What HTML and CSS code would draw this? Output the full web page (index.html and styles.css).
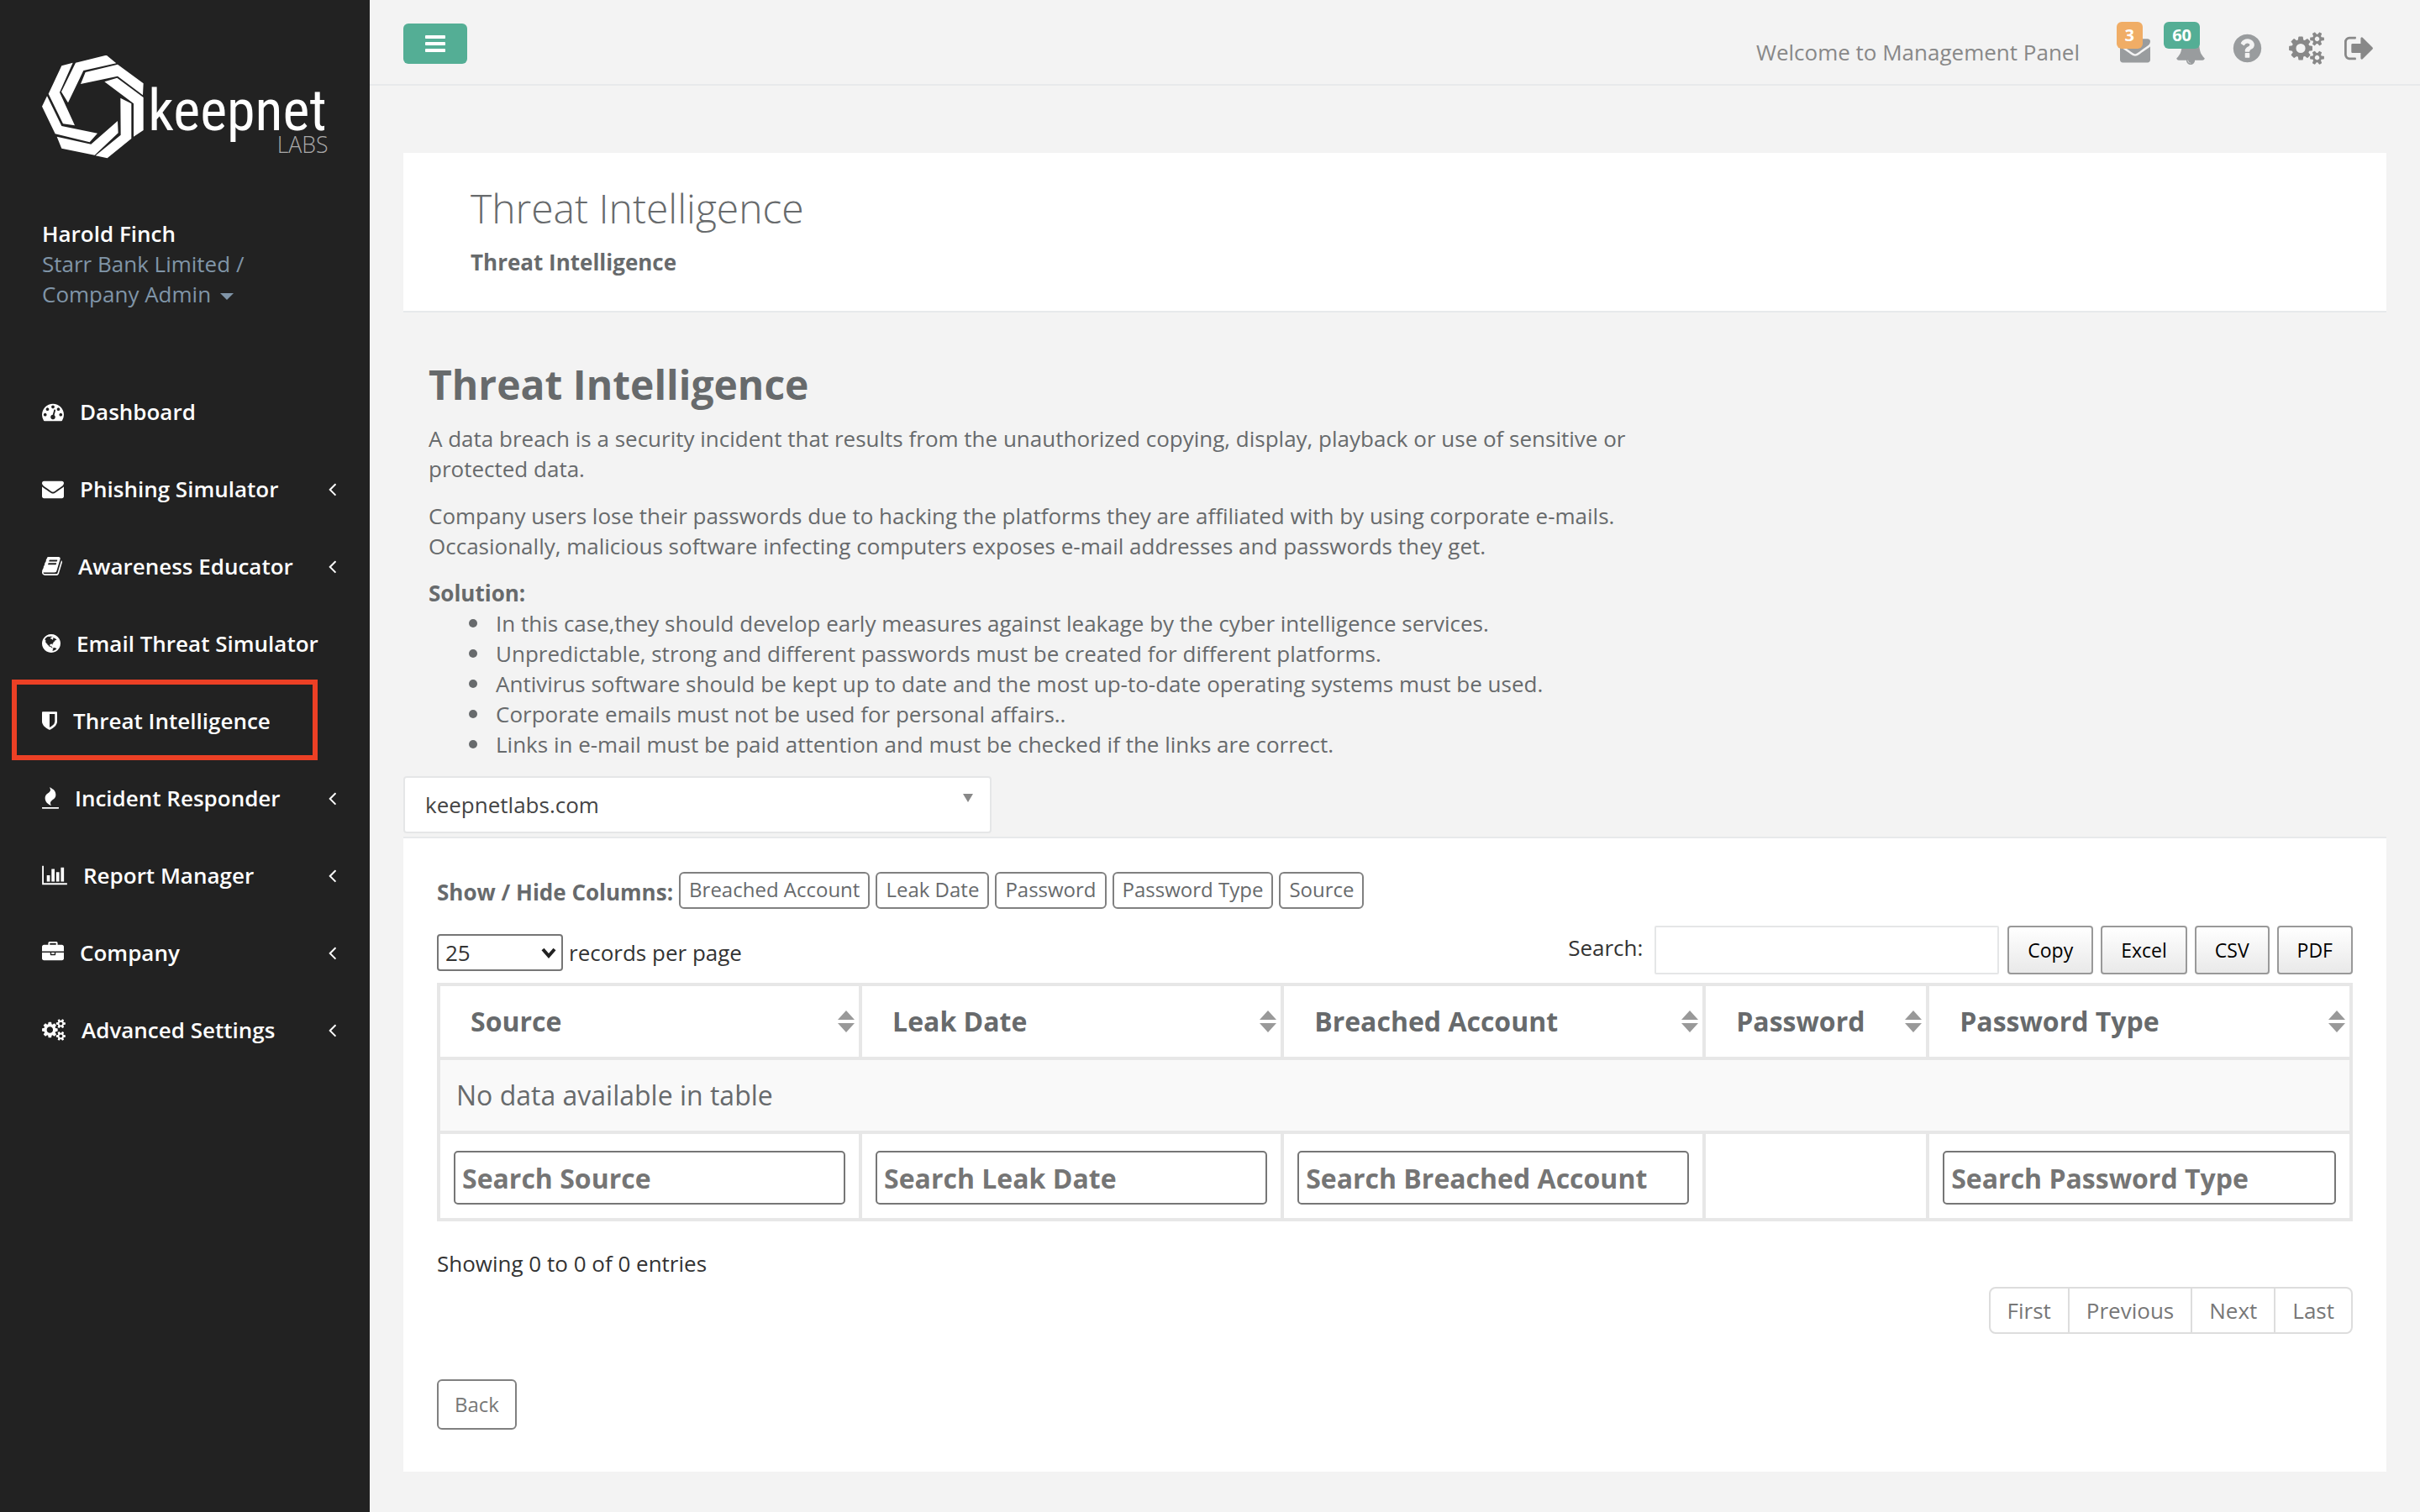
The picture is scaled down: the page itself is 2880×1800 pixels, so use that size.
FILE: index.html
```html
<!DOCTYPE html>
<html lang="en">
<head>
<meta charset="utf-8">
<title>Threat Intelligence</title>
<meta name="viewport" content="width=device-width, initial-scale=1">
<link rel="stylesheet" href="styles.css">
</head>
<body>
<div class="layout">
  <aside class="sidebar">
    <a class="brand" href="#" aria-label="Keepnet Labs">
      <svg class="brand-logo" viewBox="15 18 1029 369">
        <g fill="#fff">
          <path d="M245 17 280 46 163 72 108 187 84 148 135 44Z"/>
          <path d="M85 55 125 44 78 150 132 268 90 262 38 155Z"/>
          <path d="M33 163 85 270 213 296 185 328 62 298 15 200Z"/>
          <path d="M68 308 190 335 285 252 287 295 203 374 85 350Z"/>
          <path d="M206 376 296 302 295 170 334 190 334 315 248 385Z"/>
          <path d="M342 308 342 190 238 112 283 98 377 168 377 285Z"/>
          <path d="M375 160 285 92 153 120 170 78 285 50 377 118Z"/>
        </g>
        <text class="brand-name" x="394" y="284">keepnet</text>
        <text class="brand-sub" x="854" y="366">LABS</text>
      </svg>
    </a>
    <div class="profile">
      <strong class="profile-name">Harold Finch</strong>
      <a class="profile-role" href="#">Starr Bank Limited /<br>Company Admin <span class="caret"></span></a>
    </div>
    <nav>
      <ul class="menu">
        <li class="menu-item"><a href="#"><svg class="i26" viewBox="0 0 1792 1792"><path d="M384 1152q0-53-37.500-90.500t-90.500-37.500-90.500 37.500-37.500 90.500 37.500 90.500 90.500 37.500 90.500-37.500 37.500-90.500zm192-448q0-53-37.500-90.500t-90.500-37.500-90.500 37.500-37.500 90.500 37.500 90.500 90.500 37.500 90.500-37.500 37.500-90.500zm428 481l101-382q6-26-7.500-48.500t-38.500-29.500-48 6.500-30 39.500l-101 382q-60 5-107 43.500t-63 98.500q-20 77 20 146t117 89 146-20 89-117q16-60-6-117t-72-91zm660-33q0-53-37.500-90.500t-90.500-37.500-90.500 37.500-37.500 90.500 37.500 90.500 90.500 37.500 90.500-37.500 37.500-90.500zm-640-640q0-53-37.500-90.500t-90.500-37.500-90.500 37.500-37.500 90.500 37.500 90.500 90.500 37.500 90.500-37.500 37.500-90.500zm448 192q0-53-37.500-90.500t-90.500-37.500-90.500 37.500-37.500 90.500 37.500 90.500 90.500 37.500 90.500-37.500 37.500-90.500zm320 448q0 261-141 483-19 29-54 29h-1402q-35 0-54-29-141-221-141-483 0-182 71-348t191-286 286-191 348-71 348 71 286 191 191 286 71 348z"/></svg>Dashboard</a></li>
        <li class="menu-item"><a href="#"><svg class="i26" viewBox="0 0 1792 1792"><path d="M1792 710v794q0 66-47 113t-113 47h-1472q-66 0-113-47t-47-113v-794q44 49 101 87 362 246 497 345 57 42 92.500 65.500t94.500 48 110 24.500h2q51 0 110-24.500t94.500-48 92.500-65.500q170-123 498-345 57-39 100-87zm0-294q0 79-49 151t-122 123q-376 261-468 325-10 7-42.500 31t-54 38.500-52 32.500-57.500 27-50 9h-2q-23 0-50-9t-57.500-27-52-32.500-54-38.500-42.500-31q-91-64-262-182.500t-205-142.500q-62-42-117-115.500t-55-136.500q0-78 41.500-130t118.500-52h1472q65 0 112.500 47t47.500 113z"/></svg>Phishing Simulator<svg class="chevron" viewBox="608 0 640 1792"><path d="M1203 544q0 13-10 23l-393 393 393 393q10 10 10 23t-10 23l-50 50q-10 10-23 10t-23-10l-466-466q-10-10-10-23t10-23l466-466q10-10 23-10t23 10l50 50q10 10 10 23z"/></svg></a></li>
        <li class="menu-item"><a href="#"><svg class="i24" viewBox="64 0 1664 1792"><path d="M1703 478q40 57 18 129l-275 906q-19 64-76.500 107.500t-122.500 43.500h-923q-77 0-148.500-53.500t-99.500-131.500q-24-67-2-127 0-4 3-27t4-37q1-8-3-21.500t-3-19.500q2-11 8-21t16.500-23.500 16.500-23.500q23-38 45-91.500t30-91.500q3-10 .5-30t-.5-28q3-11 17-28t17-23q21-36 42-92t25-90q1-9-2.500-32t.5-28q4-13 22-30.500t22-22.500q19-26 42.500-84.500t27.500-96.500q1-8-3-25.500t-2-26.500q2-8 9-18t18-23 17-21q8-12 16.500-30.500t15-35 16-36 19.500-32 26.500-23.500 36-11.500 47.500 5.500l-1 3q38-9 51-9h761q74 0 114 56t18 130l-274 906q-36 119-71.500 153.500t-128.500 34.500h-869q-27 0-38 15-11 16-1 43 24 70 144 70h923q29 0 56-15.500t35-41.500l300-987q7-22 5-57 38 15 59 43zm-1064 2q-4 13 2 22.500t20 9.500h608q13 0 25.500-9.500t16.500-22.500l21-64q4-13-2-22.500t-20-9.500h-608q-13 0-25.500 9.500t-16.500 22.500zm-83 256q-4 13 2 22.500t20 9.500h608q13 0 25.500-9.500t16.500-22.500l21-64q4-13-2-22.500t-20-9.500h-608q-13 0-25.500 9.500t-16.500 22.500z"/></svg>Awareness Educator<svg class="chevron" viewBox="608 0 640 1792"><path d="M1203 544q0 13-10 23l-393 393 393 393q10 10 10 23t-10 23l-50 50q-10 10-23 10t-23-10l-466-466q-10-10-10-23t10-23l466-466q10-10 23-10t23 10l50 50q10 10 10 23z"/></svg></a></li>
        <li class="menu-item"><a href="#"><svg class="i22" viewBox="128 0 1536 1792"><path d="M896 128q209 0 385.500 103t279.500 279.500 103 385.500-103 385.500-279.500 279.500-385.500 103-385.500-103-279.500-279.500-103-385.500 103-385.500 279.500-279.500 385.500-103zm274 521q-2 1-9.500 9.500t-13.500 9.500q2 0 4.500-5t5-11 3.500-7q6-7 22-15 14-6 52-12 34-8 51 11-2-2 9.500-13t14.500-12q3-2 15-4.500t15-7.500l2-22q-12 1-17.500-7t-6.500-21q0 2-6 8 0-7-4.500-8t-11.500 1-9 1q-10-3-15-7.500t-8-16.500-4-15q-2-5-9.500-11t-9.500-10q-1-2-2.500-5.500t-3-6.500-4-5.500-5.500-2.500-7 5-7.500 10-4.500 5q-3-2-6-1.500t-4.500 1-4.500 3-5 3.500q-3 2-8.500 3t-8.500 2q15-5-1-11-10-4-16-3 9-4 7.500-12t-8.500-14h5q-1-4-8.500-8.500t-17.500-8.500-13-6q-8-5-34-9.500t-33-.5q-5 6-4.500 10.500t4 14 3.500 12.500q1 6-5.500 13t-6.500 12q0 7 14 15.500t10 21.500q-3 8-16 16t-16 12q-5 8-1.500 18.500t10.500 16.500q2 2 1.500 4t-3.500 4.500-5.500 4-6.500 3.500l-3 2q-11 5-20.500-6t-13.500-26q-7-25-16-30-23-8-29 1-5-13-41-26-25-9-58-4 6-1 0-15-7-15-19-12 3-6 4-17.500t1-13.500q3-13 12-23 1-1 7-8.500t9.500-13.500.5-6q35 4 50-11 5-5 11.500-17t10.500-17q9-6 14-5.500t14.500 5.500 14.500 5q14 1 15.500-11t-7.500-20q12 1 3-17-4-7-8-9-12-4-27 5-8 4 2 8-1-1-9.500 10.500t-16.500 17.500-16-5q-1-1-5.500-13.500t-9.500-13.500q-8 0-16 15 3-8-11-15t-24-8q19-12-8-27-7-4-20.500-5t-19.500 4q-5 7-5.500 11.500t5 8 10.500 5.500 11.500 4 8.500 3q14 10 8 14-2 1-8.500 3.500t-11.500 4.500-6 4q-3 4 0 14t-2 14q-5-5-9-17.500t-7-16.500q7 9-25 6l-10-1q-4 0-16 2t-20.500 1-13.500-8q-4-8 0-20 1-4 4-2-4-3-11-9.500t-10-8.500q-46 15-94 41 6 1 12-1 5-2 13-6.500t10-5.500q34-14 42-7l5-5q14 16 20 25-7-4-30-1-20 6-22 12 7 12 5 18-4-3-11.500-10t-14.500-11-15-5q-16 0-22 1-146 80-235 222 7 7 12 8 4 1 5 9t2.500 11 11.500-3q9 8 3 19 1-1 44 27 19 17 21 21 3 11-10 18-1-2-9-9t-9-4q-3 5 .5 18.500t10.500 12.500q-7 0-9.500 16t-2.500 35.500-1 23.500l2 1q-3 12 5.500 34.500t21.500 19.500q-13 3 20 43 6 8 8 9 3 2 12 7.500t15 10 10 10.500q4 5 10 22.500t14 23.500q-2 6 9.500 20t10.500 23q-1 0-2.500 1t-2.500 1q3 7 15.500 14t15.500 13q1 3 2 10t3 11 8 2q2-20-24-62-15-25-17-29-3-5-5.500-15.500t-4.500-14.500q2 0 6 1.500t8.500 3.500 7.500 4 2 3q-3 7 2 17.500t12 18.500 17 19 12 13q6 6 14 19.500t0 13.500q9 0 20 10.500t17 19.500q5 8 8 26t5 24q2 7 8.500 13.500t12.500 9.500l16 8 13 7q5 2 18.500 10.500t21.500 11.500q10 4 16 4t14.500-2.500 13.500-3.500q15-2 29 15t21 21q36 19 55 11-2 1 .5 7.500t8 15.500 9 14.500 5.500 8.500q5 6 18 15t18 15q6-4 7-9-3 8 7 20t18 10q14-3 14-32-31 15-49-18 0-1-2.500-5.500t-4-8.500-2.500-8.500 0-7.500 5-3q9 0 10-3.500t-2-12.500-4-13q-1-8-11-20t-12-15q-5 9-16 8t-16-9q0 1-1.500 5.500t-1.500 6.500q-13 0-15-1 1-3 2.500-17.500t3.500-22.500q1-4 5.500-12t7.500-14.500 4-12.500-4.500-9.500-17.500-2.500q-19 1-26 20-1 3-3 10.500t-5 11.500-9 7q-7 3-24 2t-24-5q-13-8-22.500-29t-9.500-37q0-10 2.500-26.500t3-25-5.500-24.500q3-2 9-9.500t10-10.500q2-1 4.500-1.500t4.500 0 4-1.500 3-6q-1-1-4-3-3-3-4-3 7 3 28.500-1.500t27.500 1.500q15 11 22-2 0-1-2.500-9.500t-.5-13.500q5 27 29 9 3 3 15.500 5t17.500 5q3 2 7 5.500t5.500 4.500 5-.5 8.500-6.500q10 14 12 24 11 40 19 44 7 3 11 2t4.500-9.500 0-14-1.500-12.500l-1-8v-18l-1-8q-15-3-18.500-12t1.500-18.500 15-18.500q1-1 8-3.500t15.500-6.500 12.500-8q21-19 15-35 7 0 11-9-1 0-5-3t-7.500-5-4.500-2q9-5 2-16 5-3 7.500-11t7.500-10q9 12 21 2 8-8 1-16 5-7 20.500-10.500t18.500-9.500q7 2 8-2t1-12 3-12q4-5 15-9t13-5l17-11q3-4 0-4 18 2 31-11 10-11-6-20 3-6-3-9.500t-15-5.500q3-1 11.500-.5t10.500-1.500q15-10-7-16-17-5-43 12zm-163 877q206-36 351-189-3-3-12.500-4.500t-12.500-3.500q-18-7-24-8 1-7-2.500-13t-8-9-12.500-8-11-7q-2-2-7-6t-7-5.500-7.500-4.500-8.500-2-10 1l-3 1q-3 1-5.500 2.500t-5.500 3-4 3 0 2.500q-21-17-36-22-5-1-11-5.500t-10.500-7-10-1.500-11.500 7q-5 5-6 15t-2 13q-7-5 0-17.500t2-18.500q-3-6-10.500-4.500t-12 4.500-11.500 8.500-9 6.500-8.500 5.500-8.500 7.500q-3 4-6 12t-5 11q-2-4-11.500-6.500t-9.500-5.500q2 10 4 35t5 38q7 31-12 48-27 25-29 40-4 22 12 26 0 7-8 20.500t-7 21.500q0 6 2 16z"/></svg>Email Threat Simulator</a></li>
        <li class="menu-item is-active"><a href="#" aria-current="page"><svg class="i18" viewBox="256 0 1280 1792"><path d="M1344 960v-640h-448v1137q119-63 213-137 235-184 235-360zm192-768v768q0 86-33.500 170.500t-83 150-118 127.500-126.500 103-121 77.500-89.500 49.500-42.500 20q-12 6-26 6t-26-6q-16-7-42.500-20t-89.500-49.500-121-77.500-126.500-103-118-127.500-83-150-33.500-170.500v-768q0-26 19-45t45-19h1152q26 0 45 19t19 45z"/></svg>Threat Intelligence</a></li>
        <li class="menu-item"><a href="#"><svg class="i20" viewBox="0 0 1408 1792"><path d="M1408 1696v64q0 13-9.500 22.500t-22.500 9.500h-1344q-13 0-22.500-9.500t-9.500-22.500v-64q0-13 9.500-22.500t22.500-9.500h1344q13 0 22.500 9.500t9.500 22.500zm-256-1056q0 78-24.500 144t-64 112.500-87.500 88-96 77.500-87.500 72-64 81.500-24.500 96.500q0 96 67 224l-4-1 1 1q-90-41-160-83t-138.500-100-113.500-122.500-72.500-150.500-27.500-184q0-78 24.500-144t64-112.500 87.500-88 96-77.500 87.500-72 64-81.500 24.500-96.500q0-94-66-224l3 1-1-1q90 41 160 83t138.500 100 113.500 122.500 72.500 150.500 27.500 184z"/></svg>Incident Responder<svg class="chevron" viewBox="608 0 640 1792"><path d="M1203 544q0 13-10 23l-393 393 393 393q10 10 10 23t-10 23l-50 50q-10 10-23 10t-23-10l-466-466q-10-10-10-23t10-23l466-466q10-10 23-10t23 10l50 50q10 10 10 23z"/></svg></a></li>
        <li class="menu-item"><a href="#"><svg class="i30" viewBox="0 0 2048 1792"><path d="M640 896v512h-256v-512h256zm384-512v1024h-256v-1024h256zm1024 1152v128h-2048v-1536h128v1408h1920zm-640-896v768h-256v-768h256zm384-384v1152h-256v-1152h256z"/></svg>Report Manager<svg class="chevron" viewBox="608 0 640 1792"><path d="M1203 544q0 13-10 23l-393 393 393 393q10 10 10 23t-10 23l-50 50q-10 10-23 10t-23-10l-466-466q-10-10-10-23t10-23l466-466q10-10 23-10t23 10l50 50q10 10 10 23z"/></svg></a></li>
        <li class="menu-item"><a href="#"><svg class="i26" viewBox="0 0 1792 1792"><path d="M640 256h512v-128h-512v128zm1152 640v480q0 66-47 113t-113 47h-1472q-66 0-113-47t-47-113v-480h672v160q0 26 19 45t45 19h320q26 0 45-19t19-45v-160h672zm-768 0v128h-256v-128h256zm768-480v384h-1792v-384q0-66 47-113t113-47h352v-160q0-40 28-68t68-28h576q40 0 68 28t28 68v160h352q66 0 113 47t47 113z"/></svg>Company<svg class="chevron" viewBox="608 0 640 1792"><path d="M1203 544q0 13-10 23l-393 393 393 393q10 10 10 23t-10 23l-50 50q-10 10-23 10t-23-10l-466-466q-10-10-10-23t10-23l466-466q10-10 23-10t23 10l50 50q10 10 10 23z"/></svg></a></li>
        <li class="menu-item"><a href="#"><svg class="i28" viewBox="0 0 1920 1792"><path id="cogs" d="M896 896q0-106-75-181t-181-75-181 75-75 181 75 181 181 75 181-75 75-181zm768 512q0-52-38-90t-90-38-90 38-38 90q0 53 37.500 90.500t90.500 37.500 90.500-37.500 37.500-90.500zm0-1024q0-52-38-90t-90-38-90 38-38 90q0 53 37.500 90.500t90.500 37.500 90.500-37.500 37.500-90.500zm-384 421v185q0 10-7 19.500t-16 10.500l-155 24q-11 35-32 76 34 48 90 115 7 11 7 20 0 12-7 19-23 30-82.500 89.500t-78.500 59.500q-11 0-21-7l-115-90q-37 19-77 31-11 108-23 155-7 24-30 24h-186q-11 0-20-7.500t-10-17.500l-23-153q-34-10-75-31l-118 89q-7 7-20 7-11 0-21-8-144-133-144-160 0-9 7-19 10-14 41-53t47-61q-23-44-35-82l-152-24q-10-1-17-9.500t-7-19.500v-185q0-10 7-19.500t16-10.500l155-24q11-35 32-76-34-48-90-115-7-11-7-20 0-12 7-20 22-30 82-89t79-59q11 0 21 7l115 90q34-18 77-32 11-108 23-154 7-24 30-24h186q11 0 20 7.500t10 17.500l23 153q34 10 75 31l118-89q8-7 20-7 11 0 21 8 144 133 144 160 0 8-7 19-12 16-42 54t-45 60q23 48 34 82l152 23q10 2 17 10.500t7 19.500zm640 533v140q0 16-149 31-12 27-30 52 51 113 51 138 0 4-4 7-122 71-124 71-8 0-46-47t-52-68q-20 2-30 2t-30-2q-14 21-52 68t-46 47q-2 0-124-71-4-3-4-7 0-25 51-138-18-25-30-52-149-15-149-31v-140q0-16 149-31 13-29 30-52-51-113-51-138 0-4 4-7 4-2 35-20t59-34 30-16q8 0 46 46.500t52 67.500q20-2 30-2t30 2q51-71 92-112l6-2q4 0 124 70 4 3 4 7 0 25-51 138 17 23 30 52 149 15 149 31zm0-1024v140q0 16-149 31-12 27-30 52 51 113 51 138 0 4-4 7-122 71-124 71-8 0-46-47t-52-68q-20 2-30 2t-30-2q-14 21-52 68t-46 47q-2 0-124-71-4-3-4-7 0-25 51-138-18-25-30-52-149-15-149-31v-140q0-16 149-31 13-29 30-52-51-113-51-138 0-4 4-7 4-2 35-20t59-34 30-16q8 0 46 46.500t52 67.500q20-2 30-2t30 2q51-71 92-112l6-2q4 0 124 70 4 3 4 7 0 25-51 138 17 23 30 52 149 15 149 31z"/></svg>Advanced Settings<svg class="chevron" viewBox="608 0 640 1792"><path d="M1203 544q0 13-10 23l-393 393 393 393q10 10 10 23t-10 23l-50 50q-10 10-23 10t-23-10l-466-466q-10-10-10-23t10-23l466-466q10-10 23-10t23 10l50 50q10 10 10 23z"/></svg></a></li>
      </ul>
    </nav>
  </aside>

  <div class="page">
    <header class="topbar">
      <button class="menu-toggle" type="button" aria-label="Toggle menu"><svg viewBox="0 0 1792 1792"><path d="M1664 1344v128q0 26-19 45t-45 19h-1408q-26 0-45-19t-19-45v-128q0-26 19-45t45-19h1408q26 0 45 19t19 45zm0-512v128q0 26-19 45t-45 19h-1408q-26 0-45-19t-19-45v-128q0-26 19-45t45-19h1408q26 0 45 19t19 45zm0-512v128q0 26-19 45t-45 19h-1408q-26 0-45-19t-19-45v-128q0-26 19-45t45-19h1408q26 0 45 19t19 45z"/></svg></button>
      <div class="topbar-right">
        <span class="welcome">Welcome to Management Panel</span>
        <div class="shortcuts">
          <a class="soft" href="#" aria-label="Messages"><svg class="t36" viewBox="0 0 1792 1792"><path d="M1792 710v794q0 66-47 113t-113 47h-1472q-66 0-113-47t-47-113v-794q44 49 101 87 362 246 497 345 57 42 92.500 65.500t94.500 48 110 24.500h2q51 0 110-24.500t94.500-48 92.500-65.500q170-123 498-345 57-39 100-87zm0-294q0 79-49 151t-122 123q-376 261-468 325-10 7-42.500 31t-54 38.500-52 32.500-57.500 27-50 9h-2q-23 0-50-9t-57.500-27-52-32.500-54-38.500-42.500-31q-91-64-262-182.500t-205-142.500q-62-42-117-115.500t-55-136.500q0-78 41.500-130t118.500-52h1472q65 0 112.500 47t47.500 113z"/></svg><span class="badge badge-warn">3</span></a>
          <a class="soft" href="#" aria-label="Notifications"><svg class="t36" viewBox="0 0 1792 1792"><path d="M912 1696q0-16-16-16-59 0-101.500-42.500t-42.500-101.500q0-16-16-16t-16 16q0 73 51.500 124.500t124.500 51.500q16 0 16-16zm816-288q0 52-38 90t-90 38h-448q0 106-75 181t-181 75-181-75-75-181h-448q-52 0-90-38t-38-90q50-42 91-88t85-119.500 74.500-158.500 50-206 19.500-260q0-152 117-282.500t307-158.500q-8-19-8-39 0-40 28-68t68-28 68 28 28 68q0 20-8 39 190 28 307 158.500t117 282.500q0 139 19.500 260t50 206 74.500 158.500 85 119.500 91 88z"/></svg><span class="badge badge-ok">60</span></a>
          <a class="soft" href="#" aria-label="Help"><svg class="t39" viewBox="0 0 1792 1792"><path d="M1024 1376v-192q0-14-9-23t-23-9h-192q-14 0-23 9t-9 23v192q0 14 9 23t23 9h192q14 0 23-9t9-23zm256-672q0-88-55.500-163t-138.500-116-170-41q-243 0-371 213-15 24 8 42l132 100q7 6 19 6 16 0 25-12 53-68 86-92 34-24 86-24 48 0 85.500 26t37.500 59q0 38-20 61t-68 45q-63 28-115.500 86.500t-52.500 125.500v36q0 14 9 23t23 9h192q14 0 23-9t9-23q0-19 21.500-49.500t54.500-49.500q32-18 49-28.500t46-35 44.500-48 28-60.500 12.500-81zm384 192q0 209-103 385.500t-279.500 279.500-385.500 103-385.500-103-279.500-279.500-103-385.500 103-385.500 279.500-279.500 385.500-103 385.500 103 279.500 279.500 103 385.500z"/></svg></a>
          <a href="#" aria-label="Settings"><svg class="t42" viewBox="0 0 1920 1792"><use href="#cogs"/></svg></a>
          <a class="signout" href="#" aria-label="Sign out"><svg class="t36w" viewBox="64 0 1664 1792"><path d="M704 1440q0 4 1 20t.5 26.500-3 23.500-10 19.500-20.500 6.500h-320q-119 0-203.500-84.500t-84.500-203.500v-704q0-119 84.500-203.500t203.500-84.500h320q13 0 22.500 9.500t9.500 22.500q0 4 1 20t.5 26.500-3 23.500-10 19.500-20.500 6.500h-320q-66 0-113 47t-47 113v704q0 66 47 113t113 47h312l11.500 1 11.500 3 8 5.500 7 9 2 13.500zm928-544q0 26-19 45l-544 544q-19 19-45 19t-45-19-19-45v-288h-448q-26 0-45-19t-19-45v-384q0-26 19-45t45-19h448v-288q0-26 19-45t45-19 45 19l544 544q19 19 19 45z"/></svg></a>
        </div>
      </div>
    </header>

    <main class="content">
      <section class="title-card">
        <h1 class="page-title">Threat Intelligence</h1>
        <strong class="crumb">Threat Intelligence</strong>
      </section>

      <section class="intro">
        <h2 class="intro-title">Threat Intelligence</h2>
        <p>A data breach is a security incident that results from the unauthorized copying, display, playback or use of sensitive or protected data.</p>
        <p>Company users lose their passwords due to hacking the platforms they are affiliated with by using corporate e-mails. Occasionally, malicious software infecting computers exposes e-mail addresses and passwords they get.</p>
        <strong>Solution:</strong>
        <ul class="tips">
          <li>In this case,they should develop early measures against leakage by the cyber intelligence services.</li>
          <li>Unpredictable, strong and different passwords must be created for different platforms.</li>
          <li>Antivirus software should be kept up to date and the most up-to-date operating systems must be used.</li>
          <li>Corporate emails must not be used for personal affairs..</li>
          <li>Links in e-mail must be paid attention and must be checked if the links are correct.</li>
        </ul>
      </section>

      <div class="domain">
        <select class="domain-select" aria-label="Domain"><option>keepnetlabs.com</option></select>
        <svg class="domain-arrow" viewBox="0 0 12 10"><path d="M0 0H12L6 10Z"/></svg>
      </div>

      <section class="panel">
        <div class="columns">
          <strong class="columns-label">Show / Hide Columns:</strong>
          <button class="tag" type="button">Breached Account</button>
          <button class="tag" type="button">Leak Date</button>
          <button class="tag" type="button">Password</button>
          <button class="tag" type="button">Password Type</button>
          <button class="tag" type="button">Source</button>
        </div>

        <div class="controls">
          <div class="length">
            <span class="length-box">
              <select class="length-select" id="length"><option>25</option></select>
              <svg class="length-arrow" viewBox="0 0 18 13"><path d="M2 2 9 10 16 2"/></svg>
            </span>
            <label for="length">records per page</label>
          </div>
          <div class="tools">
            <label class="search-label" for="search">Search:</label>
            <input class="search-input" id="search" type="text">
            <div class="exports">
              <button type="button">Copy</button>
              <button type="button">Excel</button>
              <button type="button">CSV</button>
              <button type="button">PDF</button>
            </div>
          </div>
        </div>

        <table class="grid">
          <colgroup><col class="c-wide"><col class="c-wide"><col class="c-wide"><col class="c-pass"><col></colgroup>
          <thead>
            <tr>
              <th><div class="head">Source<svg viewBox="0 0 20 26"><path d="M10 0 20 11H0ZM0 15H20L10 26Z"/></svg></div></th>
              <th><div class="head">Leak Date<svg viewBox="0 0 20 26"><path d="M10 0 20 11H0ZM0 15H20L10 26Z"/></svg></div></th>
              <th><div class="head">Breached Account<svg viewBox="0 0 20 26"><path d="M10 0 20 11H0ZM0 15H20L10 26Z"/></svg></div></th>
              <th><div class="head">Password<svg viewBox="0 0 20 26"><path d="M10 0 20 11H0ZM0 15H20L10 26Z"/></svg></div></th>
              <th><div class="head">Password Type<svg viewBox="0 0 20 26"><path d="M10 0 20 11H0ZM0 15H20L10 26Z"/></svg></div></th>
            </tr>
          </thead>
          <tbody>
            <tr><td colspan="5">No data available in table</td></tr>
          </tbody>
          <tfoot>
            <tr>
              <td><input type="text" placeholder="Search Source" aria-label="Search Source"></td>
              <td><input type="text" placeholder="Search Leak Date" aria-label="Search Leak Date"></td>
              <td><input type="text" placeholder="Search Breached Account" aria-label="Search Breached Account"></td>
              <td></td>
              <td><input type="text" placeholder="Search Password Type" aria-label="Search Password Type"></td>
            </tr>
          </tfoot>
        </table>

        <p class="info">Showing 0 to 0 of 0 entries</p>
        <nav class="pager" aria-label="Pages">
          <a href="#">First</a><a href="#">Previous</a><a href="#">Next</a><a href="#">Last</a>
        </nav>
        <button class="back" type="button">Back</button>
      </section>
    </main>
  </div>
</div>
</body>
</html>
```
FILE: styles.css
```css
* { box-sizing: border-box; }

body {
  margin: 0;
  background: #f3f3f3;
  color: #676a6c;
  font: 26px/36px "Open Sans", sans-serif;
}

h1, h2, p, ul { margin: 0; }
a { color: inherit; text-decoration: none; }
svg { display: block; flex: none; fill: currentColor; }
button, input, select { font-family: inherit; }
strong { font-weight: 700; }

.layout { display: flex; min-height: 100vh; }

/* Sidebar */
.sidebar {
  flex: none;
  width: 440px;
  padding-top: 66px;
  background: #222;
  color: #fff;
}
.brand { display: block; margin-left: 50px; }
.brand-logo { width: 343px; height: 123px; }
.brand-name { font: 400 204px "Liberation Sans Narrow", "Roboto Condensed", Roboto, sans-serif; fill: #fff; }
.brand-sub { font: 300 80px "Open Sans", sans-serif; fill: #aaa; }

.profile { margin: 71px 0 76px 50px; }
.profile-name { display: block; font-weight: 600; }
.profile-role { display: block; color: #8095a8; }
.caret {
  display: inline-block;
  margin-left: 4px;
  border: 8px solid transparent;
  border-top-color: currentColor;
  border-bottom: 0;
  vertical-align: middle;
}

.menu { padding: 0; list-style: none; }
.menu-item { position: relative; }
.menu-item a {
  display: flex;
  align-items: center;
  gap: 19px;
  height: 92px;
  padding: 0 39px 0 50px;
  font-weight: 600;
  white-space: nowrap;
}
.menu-item.is-active::after {
  content: "";
  position: absolute;
  inset: -3px 62px -1px 14px;
  border: 6px solid #ec4025;
}
.menu-item svg { height: 26px; }
.i18 { width: 18px; }
.i20 { width: 20px; }
.i22 { width: 22px; }
.i24 { width: 24px; }
.i26 { width: 26px; }
.i28 { width: 28px; }
.i30 { width: 30px; }
.chevron { width: 10px; margin-left: auto; }

/* Top bar */
.page { flex: 1; min-width: 0; }
.topbar {
  display: flex;
  justify-content: space-between;
  align-items: flex-start;
  height: 102px;
  padding: 28px 54px 0 40px;
  border-bottom: 2px solid #e7e9eb;
}
.menu-toggle {
  display: flex;
  justify-content: center;
  align-items: center;
  width: 76px;
  height: 48px;
  padding: 0;
  border: 0;
  border-radius: 6px;
  background: #54ae95;
  color: #fff;
}
.menu-toggle svg { width: 28px; height: 28px; }
.topbar-right { display: flex; align-items: flex-end; gap: 48px; height: 52px; color: #888; }
.shortcuts { display: flex; align-items: flex-end; gap: 30px; padding-bottom: 3px; }
.shortcuts a { position: relative; }
.shortcuts .signout { margin-left: -6px; }
.soft { color: #999c9e; }
.t36 { width: 36px; height: 36px; }
.t39 { width: 39px; height: 39px; }
.t42 { width: 42px; height: 39px; }
.t36w { width: 36px; height: 39px; }
.badge {
  position: absolute;
  bottom: 19px;
  height: 32px;
  padding: 0 10px;
  border-radius: 6px;
  color: #fff;
  font-size: 20px;
  font-weight: 700;
  line-height: 32px;
}
.badge-warn { right: 9px; background: #f0ad66; }
.badge-ok { right: 7px; background: #54ae95; }

/* Content */
.content { padding: 80px 40px 48px; }
.title-card {
  display: flex;
  flex-direction: column;
  gap: 20px;
  padding: 40px 80px;
  border-bottom: 2px solid #e7e9eb;
  background: #fff;
}
.page-title { font-size: 48px; font-weight: 300; line-height: 52px; }

.intro { max-width: 1490px; padding: 60px 0 20px 30px; }
.intro-title { margin-bottom: 20px; font-size: 48px; line-height: 52px; }
.intro p { margin-bottom: 20px; }
.tips { padding-left: 48px; list-style: none; }
.tips li { display: flex; align-items: center; gap: 22px; }
.tips li::before {
  content: "";
  flex: none;
  width: 10px;
  height: 10px;
  border-radius: 50%;
  background: currentColor;
}

.domain { position: relative; width: 700px; margin-bottom: 4px; }
.domain-select {
  display: block;
  width: 100%;
  height: 68px;
  padding: 0 24px;
  border: 2px solid #e5e6e7;
  border-radius: 4px;
  background: #fff;
  color: #444;
  font-size: 26px;
  appearance: none;
}
.domain-arrow { position: absolute; top: 20px; right: 22px; width: 12px; height: 12px; fill: #888; }

.panel {
  padding: 40px;
  padding-bottom: 50px;
  border-top: 2px solid #e7e9eb;
  background: #fff;
}
.columns { display: flex; align-items: flex-start; gap: 7px; }
.columns-label { line-height: 48px; }
.tag {
  height: 44px;
  padding: 0 10px 2px;
  border: 2px solid #808080;
  border-radius: 6px;
  background: #fff;
  color: #676a6c;
  font-size: 24px;
  line-height: 32px;
}

.controls { display: flex; justify-content: space-between; margin: 16px 0 10px; color: #333; }
.length { display: flex; align-items: center; align-self: flex-end; gap: 7px; padding-bottom: 4px; }
.length-box { position: relative; }
.length-select {
  display: block;
  width: 150px;
  height: 44px;
  padding: 0 8px;
  border: 2px solid #767676;
  border-radius: 4px;
  background: #fff;
  color: #333;
  font-size: 26px;
  appearance: none;
}
.length-arrow { position: absolute; top: 16px; right: 8px; width: 18px; height: 13px; fill: none; stroke: #222; stroke-width: 4; }
.tools { display: flex; align-items: flex-start; }
.search-label { margin-right: 14px; line-height: 52px; }
.search-input {
  width: 410px;
  height: 58px;
  margin-right: 10px;
  padding: 0 12px;
  border: 2px solid #e5e6e7;
  border-radius: 2px;
  font-size: 26px;
}
.exports { display: flex; gap: 9px; }
.exports button {
  height: 58px;
  padding: 0 22px;
  border: 2px solid #999;
  border-radius: 4px;
  background: linear-gradient(#fff, #e9e9e9);
  color: #000;
  font-size: 23px;
}

/* Data grid */
.grid { width: 100%; border-collapse: collapse; table-layout: fixed; font-size: 32px; line-height: 42px; }
.grid th, .grid td { height: 88px; padding: 0; border: 4px solid #e7e7e7; text-align: left; }
.c-wide { width: 22.06%; }
.c-pass { width: 266px; }
.head { display: flex; justify-content: space-between; align-items: center; padding: 0 5px 0 36px; white-space: nowrap; }
.head svg { width: 20px; height: 26px; fill: #999; }
.grid tbody td { padding-left: 19px; background: #f9f9f9; }
.grid tfoot td { padding: 20px 16px 16px; }
.grid tfoot input {
  display: block;
  width: 100%;
  height: 64px;
  padding: 0 8px;
  border: 2px solid #767676;
  border-radius: 5px;
  font-size: 32px;
  font-weight: 700;
}
.grid input::placeholder { color: #757575; }

.info { margin: 32px 0 10px; color: #333; }
.pager { display: flex; width: fit-content; margin: 0 0 54px auto; border: 2px solid #ddd; border-radius: 8px; color: #777; }
.pager a { padding: 8px 20px; }
.pager a + a { border-left: 2px solid #ddd; }
.back {
  display: block;
  height: 60px;
  padding: 0 19px 2px;
  border: 2px solid #808080;
  border-radius: 6px;
  background: #fff;
  color: #777;
  font-size: 24px;
}
```
